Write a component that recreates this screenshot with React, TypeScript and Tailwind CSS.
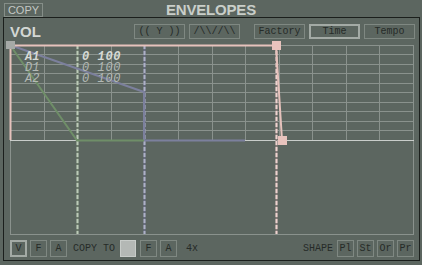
import React from "react";

const mono = { fontFamily: '"Liberation Mono", "DejaVu Sans Mono", monospace' };

function Btn({ children, w, active }: { children?: React.ReactNode; w: string; active?: boolean }) {
  return (
    <div
      className={`${w} h-full flex items-center justify-center text-[10px] text-[#262b28] ${
        active ? "border-2 border-[#a3aaa5]" : "border border-[#7f8882]"
      }`}
      style={mono}
    >
      {children}
    </div>
  );
}

function Graph() {
  const xs = Array.from({ length: 13 }, (_, i) => Math.round(10 + (i * 403) / 12));
  const ys = Array.from({ length: 11 }, (_, j) => Math.floor(45 + j * 9.5));
  return (
    <svg width={414} height={196} viewBox="4 40 414 196" className="block">
      {ys.map((y) => (
        <line key={"h" + y} x1={10} x2={413} y1={y + 0.5} y2={y + 0.5} stroke="#8a928d" strokeWidth={1} />
      ))}
      {xs.map((x) => (
        <line key={"v" + x} x1={x + 0.5} x2={x + 0.5} y1={45} y2={140} stroke="#8a928d" strokeWidth={1} />
      ))}
      <line x1={10.5} x2={10.5} y1={140} y2={234} stroke="#8a928d" strokeWidth={1} />
      <line x1={413.5} x2={413.5} y1={140} y2={234} stroke="#8a928d" strokeWidth={1} />
      <line x1={10} x2={414} y1={234.5} y2={234.5} stroke="#8a928d" strokeWidth={1} />
      <line x1={10} x2={414} y1={140.5} y2={140.5} stroke="#c9cdca" strokeWidth={1} />
      <line x1={77.5} x2={77.5} y1={45} y2={234} stroke="#6f7f6c" strokeWidth={2} />
      <line x1={77.5} x2={77.5} y1={45} y2={234} stroke="#bccab8" strokeWidth={2} strokeDasharray="4 2" />
      <line x1={144.5} x2={144.5} y1={45} y2={234} stroke="#6b6f85" strokeWidth={2} />
      <line x1={144.5} x2={144.5} y1={45} y2={234} stroke="#aeb1c6" strokeWidth={2} strokeDasharray="4 2" />
      <line x1={276.5} x2={276.5} y1={45} y2={234} stroke="#8c7f7d" strokeWidth={2} />
      <line x1={276.5} x2={276.5} y1={45} y2={234} stroke="#eed3cf" strokeWidth={2} strokeDasharray="4 2" />
      <polyline points="10,45 144,92 144,140.5 245,140.5" fill="none" stroke="#7c809d" strokeWidth={2} />
      <polyline points="10,45 77,140.5 144,140.5" fill="none" stroke="#6f8e68" strokeWidth={2} />
      <polyline points="10.5,140 10.5,45.5 276,45.5 282,140" fill="none" stroke="#e6c2bc" strokeWidth={2} />
      <rect x={6} y={41} width={9} height={8} fill="#a6aaa7" />
      <rect x={272} y={41} width={9} height={9} fill="#e8c3bd" />
      <rect x={278} y={136} width={9} height={9} fill="#e8c3bd" />
      <g style={mono} fontSize={12} fontStyle="italic">
        <text x={25} y={60} fill="#d6dad6" fontWeight="bold">A1</text>
        <text x={82} y={60} fill="#d6dad6" fontWeight="bold" letterSpacing={0.6}>0 100</text>
        <text x={25} y={71} fill="#b3b9b5">D1</text>
        <text x={82} y={71} fill="#b3b9b5" letterSpacing={0.6}>0 100</text>
        <text x={25} y={82} fill="#b3b9b5">A2</text>
        <text x={82} y={82} fill="#b3b9b5" letterSpacing={0.6}>0 100</text>
      </g>
    </svg>
  );
}

export default function App() {
  return (
    <div
      className="w-[422px] h-[265px] bg-[#5c6660] overflow-hidden flex flex-col"
      style={{ fontFamily: '"Liberation Sans", Arial, sans-serif' }}
    >
      <div className="h-[17px] grid grid-cols-[1fr_auto_1fr] items-center">
        <div className="flex">
          <div className="ml-[4px] mt-[3px] w-[39px] h-[14px] border border-[#858e88] flex items-center justify-center text-[11px] text-[#c3c8c4]">
            COPY
          </div>
        </div>
        <div className="mt-[2px] text-[15px] font-bold text-[#c9cec9] leading-none tracking-[-0.2px]">ENVELOPES</div>
        <div />
      </div>
      <div className="ml-[3px] w-[417px] h-[244px] border border-[#1b1f1c] flex flex-col">
        <div className="mt-[6px] h-[15px] flex items-center pl-[6px] pr-[4px]">
          <div className="text-[15px] font-bold text-[#d3d7d4] leading-none">VOL</div>
          <div className="ml-auto flex h-full">
            <div className="flex gap-[4px] h-full">
              <Btn w="w-[51px]">(( Y ))</Btn>
              <Btn w="w-[51px]">{"/\\\\//\\\\"}</Btn>
            </div>
            <div className="flex gap-[4px] h-full ml-[14px]">
              <Btn w="w-[51px]">Factory</Btn>
              <Btn w="w-[51px]" active>Time</Btn>
              <Btn w="w-[51px]">Tempo</Btn>
            </div>
          </div>
        </div>
        <div className="mt-[1px]">
          <Graph />
        </div>
        <div className="mt-[4px] h-[17px] flex items-center pl-[6px] pr-[5px] text-[10px] text-[#262b28]" style={mono}>
          <div className="flex gap-[3px] h-full">
            <Btn w="w-[17px]" active>V</Btn>
            <Btn w="w-[17px]">F</Btn>
            <Btn w="w-[17px]">A</Btn>
          </div>
          <div className="ml-[6px]">COPY TO</div>
          <div className="ml-[5px] w-[16px] h-full bg-[#b4b8b5] border border-[#c8ccc9]" />
          <div className="ml-[4px] flex gap-[3px] h-full">
            <Btn w="w-[17px]">F</Btn>
            <Btn w="w-[17px]">A</Btn>
          </div>
          <div className="ml-[9px]">4x</div>
          <div className="ml-auto">SHAPE</div>
          <div className="ml-[4px] flex gap-[3px] h-full">
            <Btn w="w-[17px]">Pl</Btn>
            <Btn w="w-[17px]">St</Btn>
            <Btn w="w-[17px]">Or</Btn>
            <Btn w="w-[17px]">Pr</Btn>
          </div>
        </div>
      </div>
    </div>
  );
}
